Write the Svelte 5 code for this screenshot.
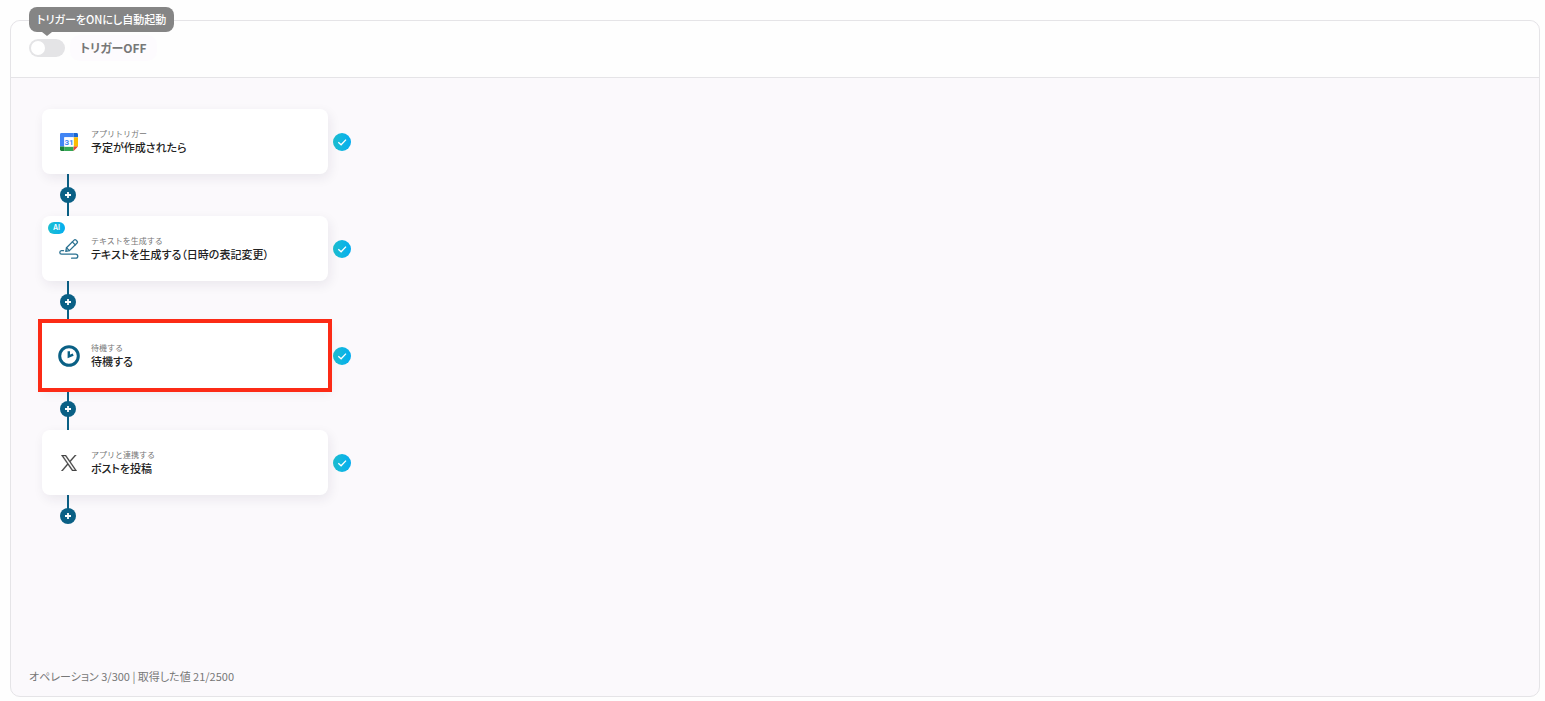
<script>
  let triggerOn = $state(false);

  const steps = [
    { icon: "calendar", kind: "アプリトリガー", title: "予定が作成されたら" },
    {
      icon: "pen",
      kind: "テキストを生成する",
      title: "テキストを生成する（日時の表記変更）",
      ai: true,
    },
    { icon: "clock", kind: "待機する", title: "待機する", selected: true },
    { icon: "x", kind: "アプリと連携する", title: "ポストを投稿" },
  ];

  const usage = { operations: 3, maxOperations: 300, values: 21, maxValues: 2500 };
</script>

<main class="flow-editor">
  <header class="toolbar">
    <div class="tooltip" role="tooltip" id="trigger-tip">トリガーをONにし自動起動</div>
    <input
      type="checkbox"
      role="switch"
      id="trigger"
      class="switch"
      aria-describedby="trigger-tip"
      bind:checked={triggerOn}
    />
    <label for="trigger">トリガー{triggerOn ? "ON" : "OFF"}</label>
  </header>

  <section class="canvas">
    {#each steps as step}
      <div class="step">
        <button class="card" class:selected={step.selected}>
          {#if step.ai}
            <span class="ai-badge">AI</span>
          {/if}
          <span class="icon">
            {#if step.icon === "calendar"}
              <svg width="18" height="18" viewBox="0 0 18 18">
                <path d="M1.4 0H13.6V4.3H4.3V13.6H0V1.4Q0 0 1.4 0Z" fill="#4285f4" />
                <path d="M13.6 0H16.6Q18 0 18 1.4V4.3H13.6Z" fill="#1967d2" />
                <path d="M13.6 4.3H18V13.6H13.6Z" fill="#fbbc04" />
                <path d="M4.3 13.6H13.6V18H4.3Z" fill="#34a853" />
                <path d="M0 13.6H4.3V18H1.4Q0 18 0 16.6Z" fill="#188038" />
                <path d="M13.6 13.6H18L13.6 18Z" fill="#ea4335" />
                <path d="M4.3 4.3H13.6V13.6H4.3Z" fill="#fff" />
                <text x="9" y="12" text-anchor="middle" class="day">31</text>
              </svg>
            {:else if step.icon === "pen"}
              <svg width="20" height="22" viewBox="0 0 20 22" class="line-icon">
                <path d="M7.5 9.7 15.1 2.1Q16 1.2 17 2.1L18.1 3.2Q19 4.1 18.1 5L10.4 12.6 6.8 13.4Z" />
                <path d="M13.3 3.9 16.3 6.9M7.5 9.7 10.4 12.6" />
                <path d="M4.5 12.7H2.6Q.8 12.9 .8 14.5T2.6 16.2H16.5Q18.8 16.3 18.8 18.2T16.7 20.2H12.6" />
              </svg>
            {:else if step.icon === "clock"}
              <svg width="22" height="22" viewBox="0 0 22 22">
                <circle cx="11" cy="11" r="9.3" fill="none" stroke="#0a6085" stroke-width="3" />
                <path d="M10.8 6.3V11.4L15.2 9.6" fill="none" stroke="#0a6085" stroke-width="2.4" />
              </svg>
            {:else}
              <svg width="16" height="16" viewBox="0 0 24 24">
                <path
                  fill="#444"
                  stroke="#444"
                  stroke-width=".5"
                  d="M14.3 10.2 23 0h-2.1l-7.6 8.8L7.3 0H.3l9.1 13.3L.3 24h2.1l8-9.3 6.4 9.3h7zm-2.8 3.3-.9-1.3L3.2 1.5h3.2l6 8.5.9 1.3 7.7 11.1h-3.2z"
                />
              </svg>
            {/if}
          </span>
          <span class="texts">
            <span class="kind">{step.kind}</span>
            <span class="title">{step.title}</span>
          </span>
        </button>
        <svg class="check" viewBox="0 0 18 18" role="img" aria-label="設定済み">
          <defs>
            <linearGradient id="check-{step.icon}">
              <stop offset="0" stop-color="#1dbfd0" />
              <stop offset="1" stop-color="#04adf0" />
            </linearGradient>
          </defs>
          <circle cx="9" cy="9" r="9" fill="url(#check-{step.icon})" />
          <path d="M5.3 9.2 8.1 11.8 13 6.6" fill="none" stroke="#fff" stroke-width="1.3" />
        </svg>
      </div>
      <div class="connector">
        <button class="add" aria-label="追加">
          <svg width="8" height="8" viewBox="0 0 8 8">
            <path d="M4 1V7M1 4H7" stroke="#fff" stroke-width="1.8" />
          </svg>
        </button>
      </div>
    {/each}
  </section>

  <footer>
    オペレーション {usage.operations}/{usage.maxOperations} | 取得した値 {usage.values}/{usage.maxValues}
  </footer>
</main>

<style>
  :global(body) {
    background: #fefefe;
  }

  .flow-editor {
    box-sizing: border-box;
    display: flex;
    flex-direction: column;
    min-height: calc(100vh - 24px);
    margin: 20px 5px 4px 10px;
    border: 1px solid #e5e4e7;
    border-radius: 10px;
    background: #fbf9fc;
    font-family: "Noto Sans CJK JP", "Noto Sans", sans-serif;
    font-feature-settings: "palt";
    color: #222;
  }

  .toolbar {
    position: relative;
    display: flex;
    align-items: center;
    gap: 5px;
    padding: 14px 18px 16px;
    border-bottom: 1px solid #e5e4e7;
    border-radius: 10px 10px 0 0;
    background: #fefefe;
  }

  .toolbar label {
    padding: 0 10px;
    border-radius: 10px;
    background: #fdfbfe;
    color: #777;
    font-size: 12px;
    font-weight: 700;
    line-height: 26px;
  }

  .switch {
    appearance: none;
    width: 36px;
    height: 18px;
    margin: 0;
    padding: 2px;
    border-radius: 9px;
    background: #e4e4e6;
    cursor: pointer;
  }

  .switch::before {
    content: "";
    display: block;
    width: 14px;
    height: 14px;
    border-radius: 50%;
    background: #fff;
  }

  .switch:checked {
    background: #04adf0;
  }

  .switch:checked::before {
    margin-left: auto;
  }

  .tooltip {
    position: absolute;
    top: -14px;
    left: 18px;
    padding: 0 8px;
    border-radius: 8px;
    background: #858585;
    color: #fff;
    font-size: 11px;
    font-weight: 500;
    line-height: 25px;
    white-space: nowrap;
  }

  .tooltip::after {
    content: "";
    position: absolute;
    top: 100%;
    left: 13px;
    border: 5px solid transparent;
    border-top: 4px solid #858585;
    border-bottom: 0;
  }

  .canvas {
    flex: 1;
    padding: 31px;
  }

  .step {
    display: flex;
    align-items: center;
    gap: 5px;
  }

  .card {
    position: relative;
    display: flex;
    align-items: center;
    gap: 11px;
    width: 286px;
    height: 65px;
    padding: 0 16px;
    border: 0;
    border-radius: 8px;
    background: #fff;
    box-shadow: 2px 4px 12px rgba(40, 30, 60, 0.08);
    color: inherit;
    font: inherit;
    font-feature-settings: inherit;
    text-align: left;
    cursor: pointer;
  }

  .card.selected {
    border-radius: 0;
    outline: 4px solid #fc2b16;
  }

  .icon {
    display: flex;
    justify-content: center;
    width: 22px;
  }

  .day {
    fill: #4285f4;
    font-family: Roboto, sans-serif;
    font-size: 8px;
    font-weight: 700;
  }

  .line-icon {
    fill: none;
    stroke: #2a7191;
    stroke-width: 1.3;
    stroke-linecap: round;
    stroke-linejoin: round;
  }

  .texts {
    display: flex;
    flex-direction: column;
  }

  .kind {
    color: #777;
    font-feature-settings: normal;
    font-size: 8px;
    line-height: 12px;
  }

  .title {
    font-size: 11px;
    font-weight: 500;
    line-height: 15px;
  }

  .ai-badge {
    position: absolute;
    top: 6px;
    left: 6px;
    width: 17px;
    border-radius: 6px;
    background: linear-gradient(90deg, #1dbfd0, #04adf0);
    color: #fff;
    font-family: Inter, sans-serif;
    font-size: 7px;
    font-weight: 600;
    line-height: 12px;
    text-align: center;
  }

  .check {
    width: 18px;
    height: 18px;
  }

  .connector {
    display: flex;
    align-items: center;
    justify-content: center;
    width: 52px;
    height: 42px;
    background: linear-gradient(#0a6085, #0a6085) center / 2px 100% no-repeat;
  }

  .connector:last-child {
    background-position: top;
    background-size: 2px 50%;
  }

  .add {
    display: flex;
    align-items: center;
    justify-content: center;
    width: 16px;
    height: 16px;
    padding: 0;
    border: 0;
    border-radius: 50%;
    background: #0a6085;
    cursor: pointer;
  }

  footer {
    padding: 0 18px 11px;
    color: #777;
    font-size: 11px;
    line-height: 18px;
  }
</style>
